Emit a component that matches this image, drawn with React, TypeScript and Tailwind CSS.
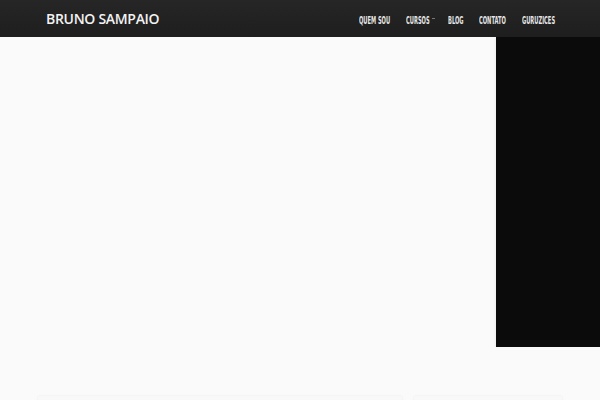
const NAV = [
  { label: 'Quem Sou', w: 'w-[31px]', ml: 'ml-0' },
  { label: 'Cursos', w: 'w-[24px]', ml: 'ml-[16px]' },
  { label: 'Blog', w: 'w-[16px]', ml: 'ml-[13px]' },
  { label: 'Contato', w: 'w-[27px]', ml: 'ml-[15px]' },
  { label: 'Guruzices', w: 'w-[34px]', ml: 'ml-[16px]' },
];

export default function App() {
  return (
    <div className="min-h-[400px] bg-[#fafafa] overflow-hidden antialiased">
      <header className="h-[37px] bg-gradient-to-b from-[#262626] to-[#1e1e1e] shadow-[0_1px_2px_rgba(0,0,0,0.3)]">
        <div className="mx-auto flex h-full w-[524px] items-center justify-between pl-2 pr-[6px]">
          <a className="text-[14px] font-semibold tracking-[-0.3px] text-[#f2f2f2] [font-family:'Open_Sans',sans-serif]">
            BRUNO SAMPAIO
          </a>
          <nav className="flex -translate-y-px items-center">
            {NAV.map((item) => (
              <div key={item.label} className={`${item.ml} flex items-center`}>
                <span className={`${item.w} block whitespace-nowrap leading-none`}>
                  <span className="inline-block origin-left scale-x-[0.57] text-[10px] font-bold uppercase leading-none text-[#e6e6e6] antialiased [font-family:'DejaVu_Sans_Condensed',sans-serif]">
                    {item.label}
                  </span>
                </span>
                {item.label === 'Cursos' && (
                  <span className="ml-[2px] mt-px block h-px w-[3px] bg-[#777]" />
                )}
              </div>
            ))}
          </nav>
        </div>
      </header>
      <main className="flex">
        <div className="h-[310px] flex-1 bg-[#fafafa] shadow-[inset_-3px_0_3px_-2px_rgba(0,0,0,0.05)]" />
        <div className="h-[310px] w-[104px] bg-[#0b0b0b]" />
      </main>
      <section className="mx-auto mt-[49px] flex w-[524px] gap-[12px]">
        <div className="h-[120px] w-[364px] bg-[#f8f8f8] shadow-[0_0_2px_rgba(0,0,0,0.07)]" />
        <div className="h-[120px] w-[148px] bg-[#f8f8f8] shadow-[0_0_2px_rgba(0,0,0,0.07)]" />
      </section>
    </div>
  );
}
